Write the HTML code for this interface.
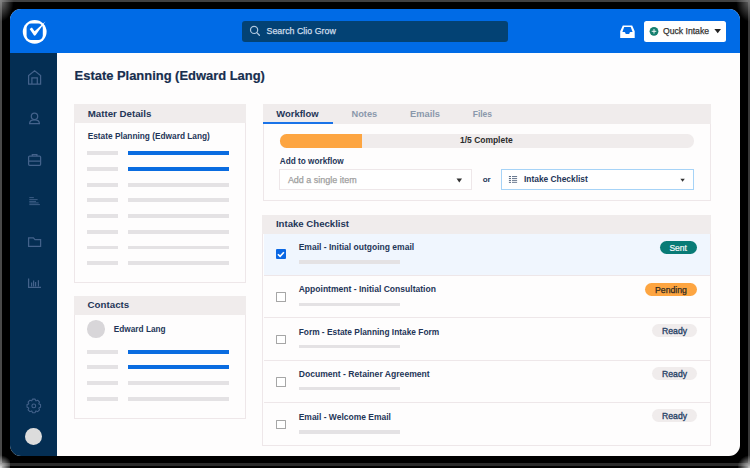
<!DOCTYPE html>
<html><head><meta charset="utf-8">
<style>
html,body{margin:0;padding:0;}
body{width:750px;height:468px;background:#000;position:relative;overflow:hidden;font-family:"Liberation Sans",sans-serif;}
.t{position:absolute;white-space:nowrap;}
.b{position:absolute;box-sizing:border-box;}
svg{position:absolute;left:0;top:0;}
</style></head><body>
<div class="b" style="left:0px;top:0px;width:750.00px;height:2.00px;background:#404040;"></div>
<div class="b" style="left:0px;top:0px;width:2.00px;height:468.00px;background:#4a4a4a;"></div>
<div class="b" style="left:747.5px;top:0px;width:2.50px;height:468.00px;background:#383838;"></div>
<div class="b" style="left:0px;top:463px;width:750.00px;height:3.00px;background:#2c2c2c;"></div>
<div class="b" style="left:0px;top:0px;width:14.00px;height:22.00px;background:radial-gradient(ellipse at 0 0, rgba(150,150,150,0.8), rgba(0,0,0,0) 70%);"></div>
<div class="b" style="left:0px;top:454px;width:10.00px;height:14.00px;background:radial-gradient(circle at 0 100%, rgba(230,230,230,0.95), rgba(0,0,0,0) 75%);"></div>
<div class="b" style="left:738px;top:454px;width:12.00px;height:14.00px;background:radial-gradient(circle at 100% 100%, rgba(220,220,220,0.9), rgba(0,0,0,0) 70%);"></div>
<div class="b" style="left:736px;top:0px;width:14.00px;height:22.00px;background:radial-gradient(ellipse at 100% 0, rgba(150,150,150,0.7), rgba(0,0,0,0) 70%);"></div>
<div class="b" style="left:10px;top:9px;width:730.00px;height:447.00px;background:#fefdfd;border-radius:11px;overflow:hidden;"></div>
<div class="b" style="left:10px;top:9px;width:730.00px;height:44.00px;background:#006be6;border-radius:11px 11px 0 0;"></div>
<div class="b" style="left:10px;top:53px;width:47.00px;height:403.00px;background:#042e53;border-radius:0 0 0 11px;"></div>
<div class="b" style="left:242px;top:21px;width:266.00px;height:20.50px;background:#034274;border-radius:3px;"></div>
<div class="t" style="left:266.50px;top:25.83px;font-size:8.86px;line-height:10.189px;color:#cddcea;font-weight:400;letter-spacing:0px;-webkit-text-stroke:0.25px #cddcea;">Search Clio Grow</div>
<div class="b" style="left:644px;top:21px;width:82.00px;height:21.00px;background:#fff;border-radius:2.5px;"></div>
<div class="t" style="left:663.00px;top:27.03px;font-size:8.65px;line-height:9.947px;color:#333333;font-weight:400;letter-spacing:0px;-webkit-text-stroke:0.25px #333;">Quck Intake</div>
<div class="t" style="left:74.60px;top:69.38px;font-size:12.93px;line-height:14.869px;color:#172e4e;font-weight:700;letter-spacing:0px;-webkit-text-stroke:0.2px #172e4e;">Estate Planning (Edward Lang)</div>
<div class="b" style="left:74px;top:104px;width:172.00px;height:179.00px;border:1px solid #eee7e9;"></div>
<div class="b" style="left:74px;top:104px;width:172.00px;height:19.30px;background:#f0ecec;"></div>
<div class="t" style="left:87.70px;top:108.25px;font-size:9.71px;line-height:11.167px;color:#1f3658;font-weight:700;letter-spacing:0px;">Matter Details</div>
<div class="t" style="left:87.70px;top:132.44px;font-size:8.31px;line-height:9.556px;color:#1f3658;font-weight:700;letter-spacing:0px;">Estate Planning (Edward Lang)</div>
<div class="b" style="left:87.3px;top:151.3px;width:30.50px;height:3.80px;background:#e4e2e4;"></div>
<div class="b" style="left:128px;top:151.3px;width:101.20px;height:3.80px;background:#0a6ce0;"></div>
<div class="b" style="left:87.3px;top:167.03px;width:30.50px;height:3.80px;background:#e4e2e4;"></div>
<div class="b" style="left:128px;top:167.03px;width:101.20px;height:3.80px;background:#0a6ce0;"></div>
<div class="b" style="left:87.3px;top:182.76000000000002px;width:30.50px;height:3.80px;background:#e4e2e4;"></div>
<div class="b" style="left:128px;top:182.76000000000002px;width:101.20px;height:3.80px;background:#e4e2e4;"></div>
<div class="b" style="left:87.3px;top:198.49px;width:30.50px;height:3.80px;background:#e4e2e4;"></div>
<div class="b" style="left:128px;top:198.49px;width:101.20px;height:3.80px;background:#e4e2e4;"></div>
<div class="b" style="left:87.3px;top:214.22000000000003px;width:30.50px;height:3.80px;background:#e4e2e4;"></div>
<div class="b" style="left:128px;top:214.22000000000003px;width:101.20px;height:3.80px;background:#e4e2e4;"></div>
<div class="b" style="left:87.3px;top:229.95000000000002px;width:30.50px;height:3.80px;background:#e4e2e4;"></div>
<div class="b" style="left:128px;top:229.95000000000002px;width:101.20px;height:3.80px;background:#e4e2e4;"></div>
<div class="b" style="left:87.3px;top:245.68px;width:30.50px;height:3.80px;background:#e4e2e4;"></div>
<div class="b" style="left:128px;top:245.68px;width:101.20px;height:3.80px;background:#e4e2e4;"></div>
<div class="b" style="left:87.3px;top:261.41px;width:30.50px;height:3.80px;background:#e4e2e4;"></div>
<div class="b" style="left:128px;top:261.41px;width:101.20px;height:3.80px;background:#e4e2e4;"></div>
<div class="b" style="left:74px;top:296px;width:172.00px;height:123.00px;border:1px solid #eee7e9;"></div>
<div class="b" style="left:74px;top:296px;width:172.00px;height:18.60px;background:#f0ecec;"></div>
<div class="t" style="left:87.60px;top:299.04px;font-size:9.72px;line-height:11.178px;color:#1f3658;font-weight:700;letter-spacing:0px;">Contacts</div>
<div class="b" style="left:87.3px;top:320.2px;width:17.60px;height:17.60px;background:#d8d6d9;border-radius:50%;"></div>
<div class="t" style="left:113.80px;top:324.70px;font-size:8.25px;line-height:9.487px;color:#1f3658;font-weight:700;letter-spacing:0px;">Edward Lang</div>
<div class="b" style="left:87.3px;top:349.6px;width:30.40px;height:4.00px;background:#e4e2e4;"></div>
<div class="b" style="left:128.3px;top:349.6px;width:100.90px;height:4.00px;background:#0a6ce0;"></div>
<div class="b" style="left:87.3px;top:365.33000000000004px;width:30.40px;height:4.00px;background:#e4e2e4;"></div>
<div class="b" style="left:128.3px;top:365.33000000000004px;width:100.90px;height:4.00px;background:#0a6ce0;"></div>
<div class="b" style="left:87.3px;top:381.06px;width:30.40px;height:4.00px;background:#e4e2e4;"></div>
<div class="b" style="left:128.3px;top:381.06px;width:100.90px;height:4.00px;background:#e4e2e4;"></div>
<div class="b" style="left:87.3px;top:396.79px;width:30.40px;height:4.00px;background:#e4e2e4;"></div>
<div class="b" style="left:128.3px;top:396.79px;width:100.90px;height:4.00px;background:#e4e2e4;"></div>
<div class="b" style="left:262.5px;top:104px;width:448.50px;height:97.00px;border:1px solid #eee7e9;"></div>
<div class="b" style="left:262.5px;top:104px;width:448.50px;height:19.60px;background:#f0ecec;"></div>
<div class="b" style="left:263.4px;top:121.8px;width:69.60px;height:2.00px;background:#1a73e8;"></div>
<div class="t" style="left:276.30px;top:108.50px;font-size:9.44px;line-height:10.856px;color:#1f3658;font-weight:700;letter-spacing:0px;">Workflow</div>
<div class="t" style="left:351.50px;top:108.68px;font-size:9.24px;line-height:10.626px;color:#8a98ab;font-weight:700;letter-spacing:0px;">Notes</div>
<div class="t" style="left:410.00px;top:108.63px;font-size:9.3px;line-height:10.695px;color:#8a98ab;font-weight:700;letter-spacing:0px;">Emails</div>
<div class="t" style="left:472.70px;top:110.37px;font-size:8.5px;line-height:9.775px;color:#8a98ab;font-weight:700;letter-spacing:0px;">Files</div>
<div class="b" style="left:279.5px;top:134px;width:414.30px;height:13.50px;background:#f0ecec;border-radius:6.5px;overflow:hidden;"></div>
<div class="b" style="left:279.5px;top:134px;width:82.90px;height:13.50px;background:#fda541;border-radius:6.5px 0 0 6.5px;"></div>
<div class="t" style="left:460.00px;top:136.49px;font-size:8.47px;line-height:9.741px;color:#2b2b2b;font-weight:700;letter-spacing:0px;">1/5 Complete</div>
<div class="t" style="left:279.80px;top:157.33px;font-size:8.21px;line-height:9.441px;color:#1f3658;font-weight:700;letter-spacing:0px;">Add to workflow</div>
<div class="b" style="left:279px;top:169px;width:193.00px;height:21.00px;border:1px solid #eee7e9;background:#fff;"></div>
<div class="t" style="left:287.90px;top:174.73px;font-size:8.97px;line-height:10.316px;color:#a0a0a0;font-weight:400;letter-spacing:0px;-webkit-text-stroke:0.25px #a0a0a0;">Add a single item</div>
<svg width="750" height="468"><path d="M456.5,178.6 L462,178.6 L459.25,182.4 Z" fill="#333"/></svg>
<div class="t" style="left:482.70px;top:175.13px;font-size:8px;line-height:9.2px;color:#1f3658;font-weight:700;letter-spacing:0px;">or</div>
<div class="b" style="left:501px;top:169px;width:193.00px;height:21.00px;border:1px solid #a6d3f7;background:#fff;"></div>
<div class="t" style="left:524.00px;top:175.26px;font-size:8.4px;line-height:9.66px;color:#1f3658;font-weight:700;letter-spacing:0px;">Intake Checklist</div>
<svg width="750" height="468"><path d="M680.4,178.7 L684.8,178.7 L682.6,181.8 Z" fill="#333"/></svg>
<svg width="750" height="468"><rect x="508.9" y="176.00" width="2.1" height="1.0" fill="#5a6b84"/><rect x="512" y="176.00" width="5.1" height="0.9" fill="#5a6b84"/><rect x="508.9" y="177.95" width="2.1" height="1.0" fill="#5a6b84"/><rect x="512" y="177.95" width="5.1" height="0.9" fill="#5a6b84"/><rect x="508.9" y="179.90" width="2.1" height="1.0" fill="#5a6b84"/><rect x="512" y="179.90" width="5.1" height="0.9" fill="#5a6b84"/><rect x="508.9" y="181.85" width="2.1" height="1.0" fill="#5a6b84"/><rect x="512" y="181.85" width="5.1" height="0.9" fill="#5a6b84"/></svg>
<div class="b" style="left:262px;top:214.5px;width:449.00px;height:231.30px;border:1px solid #eee7e9;"></div>
<div class="b" style="left:262px;top:214.5px;width:449.00px;height:19.00px;background:#f0ecec;"></div>
<div class="t" style="left:275.90px;top:218.23px;font-size:9.62px;line-height:11.063px;color:#1f3658;font-weight:700;letter-spacing:0px;">Intake Checklist</div>
<div class="b" style="left:263.5px;top:233.5px;width:446.50px;height:41.80px;background:#f0f6fe;"></div>
<div class="b" style="left:275.9px;top:249px;width:10.00px;height:10.30px;background:#0b68e4;border-radius:1px;"></div>
<svg width="750" height="468"><path d="M277.9,254.20 L280.1,256.40 L283.9,252.20" stroke="#fff" stroke-width="1.6" fill="none"/></svg>
<div class="t" style="left:298.70px;top:243.15px;font-size:8.52px;line-height:9.798px;color:#1f3658;font-weight:700;letter-spacing:0px;">Email - Initial outgoing email</div>
<div class="b" style="left:299px;top:260px;width:100.60px;height:3.80px;background:#e4e2e4;"></div>
<div class="b" style="left:659.7px;top:240.8px;width:37.60px;height:13.60px;background:#097b76;border-radius:7px;"></div>
<div class="t" style="left:669.40px;top:243.57px;font-size:8.5px;line-height:9.775px;color:#f4f8f8;font-weight:400;letter-spacing:0px;-webkit-text-stroke:0.2px #f4f8f8;">Sent</div>
<div class="b" style="left:263.5px;top:275.3px;width:446.50px;height:1.00px;background:#eee7e9;"></div>
<div class="b" style="left:275.9px;top:292px;width:9.90px;height:9.70px;border:1.6px solid #a6a6a6;border-radius:0.5px;background:#fff;"></div>
<div class="t" style="left:298.70px;top:285.12px;font-size:8.55px;line-height:9.832px;color:#1f3658;font-weight:700;letter-spacing:0px;">Appointment - Initial Consultation</div>
<div class="b" style="left:299px;top:302.6px;width:100.60px;height:3.80px;background:#e4e2e4;"></div>
<div class="b" style="left:644.8px;top:283px;width:52.50px;height:13.30px;background:#fda541;border-radius:7px;"></div>
<div class="t" style="left:655.00px;top:285.38px;font-size:8.7px;line-height:10.005px;color:#2e2a22;font-weight:400;letter-spacing:0px;-webkit-text-stroke:0.25px #2e2a22;">Pending</div>
<div class="b" style="left:263.5px;top:317.3px;width:446.50px;height:1.00px;background:#eee7e9;"></div>
<div class="b" style="left:275.9px;top:334.7px;width:9.90px;height:9.70px;border:1.6px solid #a6a6a6;border-radius:0.5px;background:#fff;"></div>
<div class="t" style="left:298.70px;top:328.30px;font-size:8.35px;line-height:9.602px;color:#1f3658;font-weight:700;letter-spacing:0px;">Form - Estate Planning Intake Form</div>
<div class="b" style="left:299px;top:344.7px;width:100.60px;height:3.80px;background:#e4e2e4;"></div>
<div class="b" style="left:652px;top:324.3px;width:45.10px;height:13.10px;background:#f0ecec;border-radius:6.5px;"></div>
<div class="t" style="left:662.10px;top:326.93px;font-size:8.65px;line-height:9.947px;color:#2a4468;font-weight:400;letter-spacing:0px;-webkit-text-stroke:0.35px #2a4468;">Ready</div>
<div class="b" style="left:263.5px;top:360.0px;width:446.50px;height:1.00px;background:#eee7e9;"></div>
<div class="b" style="left:275.9px;top:377px;width:9.90px;height:9.70px;border:1.6px solid #a6a6a6;border-radius:0.5px;background:#fff;"></div>
<div class="t" style="left:298.70px;top:370.07px;font-size:8.6px;line-height:9.89px;color:#1f3658;font-weight:700;letter-spacing:0px;">Document - Retainer Agreement</div>
<div class="b" style="left:299px;top:386.7px;width:100.60px;height:3.80px;background:#e4e2e4;"></div>
<div class="b" style="left:652px;top:366.9px;width:45.10px;height:13.10px;background:#f0ecec;border-radius:6.5px;"></div>
<div class="t" style="left:662.10px;top:369.53px;font-size:8.65px;line-height:9.947px;color:#2a4468;font-weight:400;letter-spacing:0px;-webkit-text-stroke:0.35px #2a4468;">Ready</div>
<div class="b" style="left:263.5px;top:402.2px;width:446.50px;height:1.00px;background:#eee7e9;"></div>
<div class="b" style="left:275.9px;top:419.6px;width:9.90px;height:9.70px;border:1.6px solid #a6a6a6;border-radius:0.5px;background:#fff;"></div>
<div class="t" style="left:298.70px;top:413.18px;font-size:8.49px;line-height:9.763px;color:#1f3658;font-weight:700;letter-spacing:0px;">Email - Welcome Email</div>
<div class="b" style="left:299px;top:430px;width:100.60px;height:3.80px;background:#e4e2e4;"></div>
<div class="b" style="left:652px;top:409px;width:45.10px;height:12.80px;background:#f0ecec;border-radius:6.5px;"></div>
<div class="t" style="left:662.10px;top:411.63px;font-size:8.65px;line-height:9.947px;color:#2a4468;font-weight:400;letter-spacing:0px;-webkit-text-stroke:0.35px #2a4468;">Ready</div>
<svg width="750" height="468">
<circle cx="34.7" cy="31.8" r="11.9" fill="#fff"/>
<rect x="26.6" y="23.6" width="16.2" height="16.5" rx="4.5" fill="#006be6"/>
<path d="M29.6,29.0 L31.9,27.6 L34.6,31.2 L45.4,21.6 L35.6,35.3 L34.2,35.8 Z" fill="#fff"/>
</svg>
<svg width="750" height="468">
<circle cx="254.1" cy="29.9" r="3.6" stroke="#afc7de" stroke-width="1.2" fill="none"/>
<path d="M256.8,32.6 L259.4,35.3" stroke="#afc7de" stroke-width="1.3" stroke-linecap="round"/>
</svg>
<svg width="750" height="468">
<path fill-rule="evenodd" fill="#fff" d="M622.8,25.6 L632.2,25.6 L634.7,31.3 L634.7,37.9 L620.2,37.9 L620.2,31.3 Z M624.2,27 L630.7,27 L632.6,32.1 L630.5,32.1 Q629.8,32.1 629.6,32.8 L629.4,33.6 Q629.2,34.1 628.6,34.1 L626.3,34.1 Q625.7,34.1 625.5,33.6 L625.3,32.8 Q625.1,32.1 624.4,32.1 L622.4,32.1 Z"/>
</svg>
<svg width="750" height="468">
<circle cx="654" cy="31.3" r="4.4" fill="#147f6e"/>
<path d="M654,29 L654,33.6 M651.7,31.3 L656.3,31.3" stroke="#fff" stroke-width="0.9"/>
<path d="M714.4,29.0 L721,29.0 L717.7,33.2 Z" fill="#222"/>
</svg>
<svg width="750" height="468" fill="none" stroke="#43628b" stroke-width="1.25">
<path d="M28.6,84.2 L28.6,75.5 L34.6,70.8 L40.6,75.5 L40.6,84.2 Z M31.9,84.2 L31.9,77.9 L37.3,77.9 L37.3,84.2"/>
<circle cx="34.5" cy="116.3" r="3.2"/>
<path d="M29.6,123.6 Q29.6,119.9 34.5,119.9 Q39.4,119.9 39.4,123.6 Z"/>
<rect x="28.6" y="156" width="12" height="9.3" rx="1"/>
<path d="M28.6,161 L40.6,161 M32.3,156 L32.3,154.5 L36.9,154.5 L36.9,156"/>
<path d="M28.6,246.4 L28.6,237.8 L33.4,237.8 L35,239.6 L40.6,239.6 L40.6,246.4 Z"/>
<path d="M28.6,278.4 L28.6,287.4 L41,287.4"/>
</svg>
<svg width="750" height="468" fill="#43628b">
<rect x="29.3" y="197.2" width="4.5" height="0.9"/>
<rect x="29.3" y="199.2" width="8.3" height="0.9"/>
<rect x="29.3" y="200.9" width="6.7" height="0.9"/>
<rect x="29.3" y="202.5" width="9.3" height="0.9"/>
<rect x="29.3" y="204.2" width="10.6" height="0.9"/>
<rect x="31" y="282.5" width="1.2" height="4" />
<rect x="33" y="280.5" width="1.2" height="6" />
<rect x="35" y="282" width="1.2" height="4.5" />
<rect x="37.8" y="280.2" width="1.2" height="6.3" />
</svg>
<svg width="750" height="468" fill="none" stroke="#43628b" stroke-width="1.05">
<polygon points="31.83,400.77 32.48,399.13 35.12,399.13 35.77,400.77 36.04,400.88 37.66,400.18 39.52,402.04 38.82,403.66 38.93,403.93 40.57,404.58 40.57,407.22 38.93,407.87 38.82,408.14 39.52,409.76 37.66,411.62 36.04,410.92 35.77,411.03 35.12,412.67 32.48,412.67 31.83,411.03 31.56,410.92 29.94,411.62 28.08,409.76 28.78,408.14 28.67,407.87 27.03,407.22 27.03,404.58 28.67,403.93 28.78,403.66 28.08,402.04 29.94,400.18 31.56,400.88" stroke-linejoin="round"/>
<circle cx="33.8" cy="405.9" r="1.9"/>
</svg>
<div class="b" style="left:25.3px;top:427.5px;width:16.80px;height:17.00px;background:#dcdcdc;border-radius:50%;"></div>
</body></html>
